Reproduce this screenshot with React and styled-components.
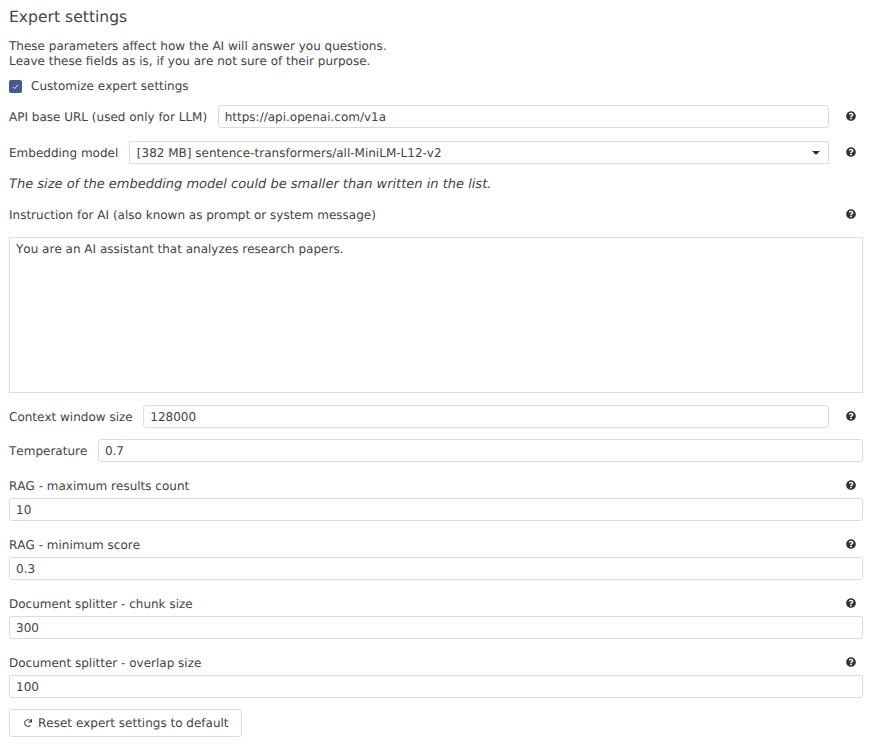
import styled, { createGlobalStyle } from "styled-components";
import { FaQuestionCircle, FaRedo } from "react-icons/fa";

const Global = createGlobalStyle`
html, body { margin:0; padding:0; background:#fff; }
body { font-family:"DejaVu Sans", Verdana, sans-serif; font-size:12px; color:#444; }
* { box-sizing:border-box; font-kerning:none; text-rendering:geometricPrecision; }
`;

const Help = () => (
  <HelpSlot>
    <FaQuestionCircle size={10} color="#333" />
  </HelpSlot>
);

const App = () => {
  return (
    <Page>
      <Global />
      <Title>Expert settings</Title>
      <Intro>
        These parameters affect how the AI will answer you questions.
        <br />
        Leave these fields as is, if you are not sure of their purpose.
      </Intro>
      <CheckRow>
        <CheckBox>
          <svg width="9" height="9" viewBox="0 0 9 9">
            <path d="M2 4.8 L3.8 6.6 L7 2.6" fill="none" stroke="#dfe4f0" strokeWidth="1" />
          </svg>
        </CheckBox>
        Customize expert settings
      </CheckRow>

      <Row $top={11}>
        <Label>API base URL (used only for LLM)</Label>
        <Input readOnly value="https://api.openai.com/v1a" />
        <Help />
      </Row>
      <Row $top={13}>
        <Label>Embedding model</Label>
        <Select>
          <span>[382 MB] sentence-transformers/all-MiniLM-L12-v2</span>
          <svg width="8" height="4" viewBox="0 0 8 4">
            <path d="M0 0 H8 L4 4 Z" fill="#333" />
          </svg>
        </Select>
        <Help />
      </Row>
      <Note>The size of the embedding model could be smaller than written in the list.</Note>

      <LabelRow $top={14}>
        <span>Instruction for AI (also known as prompt or system message)</span>
        <Help />
      </LabelRow>
      <TextArea readOnly value="You are an AI assistant that analyzes research papers." />

      <Row $top={12}>
        <Label>Context window size</Label>
        <Input readOnly value="128000" />
        <Help />
      </Row>
      <Row $top={11}>
        <Label>Temperature</Label>
        <Input readOnly value="0.7" />
      </Row>

      <Stack label="RAG - maximum results count" value="10" />
      <Stack label="RAG - minimum score" value="0.3" />
      <Stack label="Document splitter - chunk size" value="300" />
      <Stack label="Document splitter - overlap size" value="100" />

      <ResetButton>
        <FaRedo size={8} />
        Reset expert settings to default
      </ResetButton>
    </Page>
  );
};

const Stack = ({ label, value }) => (
  <>
    <LabelRow $top={16}>
      <span>{label}</span>
      <Help />
    </LabelRow>
    <FullInput readOnly value={value} />
  </>
);

const Page = styled.div`
width:878px;
height:752px;
overflow:hidden;
padding:8px 15px 0 9px;
line-height:16px;
`;

const Title = styled.h2`
margin:0;
font-size:15.6px;
font-weight:400;
line-height:19px;
color:#444;
`;

const Intro = styled.p`
margin:12px 0 0;
font-size:12px;
line-height:15px;
color:#444;
`;

const CheckRow = styled.div`
display:flex;
align-items:center;
gap:9px;
margin-top:9px;
height:16px;
font-size:12px;
`;

const CheckBox = styled.span`
display:flex;
align-items:center;
justify-content:center;
width:13px;
height:13px;
border-radius:2px;
background:#475a8c;
`;

const Row = styled.div`
display:flex;
align-items:center;
gap:10.6px;
height:23px;
margin-top:${(p) => p.$top}px;
`;

const Label = styled.label`
font-size:12px;
white-space:nowrap;
flex:none;
`;

const Input = styled.input`
flex:1;
min-width:0;
height:23px;
padding:0 6px;
border:1px solid #dcdcdc;
border-radius:3px;
font:12px "DejaVu Sans", sans-serif;
font-kerning:none;
color:#444;
background:#fff;
outline:none;
`;

const Select = styled.div`
flex:1;
display:flex;
align-items:center;
justify-content:space-between;
height:23px;
padding:0 8px 0 7px;
border:1px solid #dcdcdc;
font-size:12px;
color:#444;
`;

const HelpSlot = styled.span`
display:flex;
flex:none;
width:23px;
padding-left:6px;
margin-bottom:2px;
`;

const Note = styled.p`
margin:13px 0 0;
font-size:13px;
font-style:italic;
line-height:16px;
`;

const LabelRow = styled.div`
display:flex;
align-items:center;
justify-content:space-between;
height:16px;
font-size:12px;
margin-top:${(p) => p.$top}px;
`;

const TextArea = styled.textarea`
display:block;
width:100%;
height:156px;
margin-top:14px;
padding:4px 6px;
border:1px solid #dcdcdc;
font:12px/15px "DejaVu Sans", sans-serif;
font-kerning:none;
color:#444;
resize:none;
outline:none;
`;

const FullInput = styled(Input)`
display:block;
width:100%;
margin-top:4px;
`;

const ResetButton = styled.button`
display:flex;
align-items:center;
gap:6px;
height:28px;
margin-top:11px;
padding:0 12px 0 14px;
background:#fff;
border:1px solid #dcdcdc;
border-radius:3px;
font:12px "DejaVu Sans", sans-serif;
font-kerning:none;
color:#444;
`;

export default App;
